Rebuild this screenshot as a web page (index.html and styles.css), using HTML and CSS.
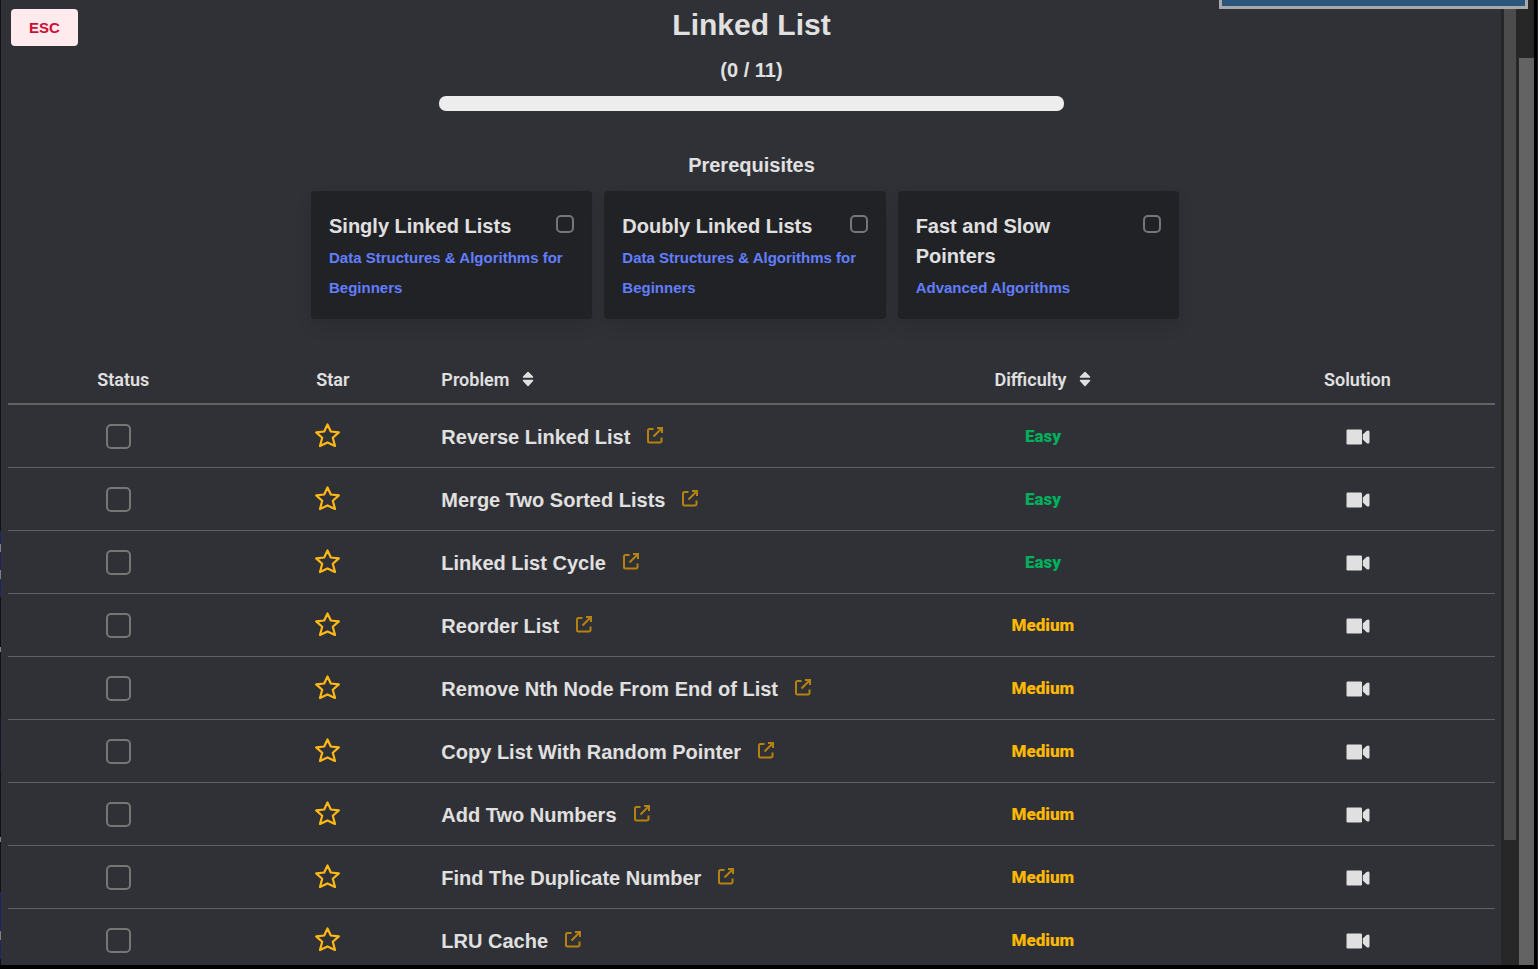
FILE: index.html
```html
<!DOCTYPE html>
<html lang="en">
<head>
<meta charset="utf-8">
<title>Linked List</title>
<link rel="stylesheet" href="styles.css">
</head>
<body>
<svg class="sprite" aria-hidden="true">
  <symbol id="star" viewBox="0 0 25 25"><path d="M12.500 1.500L15.800 8.500L23.800 9.400L17.800 14.800L20 23L12.500 19.400L5 23L7.200 14.800L1.200 9.400L9.200 8.500Z" fill="none" stroke="currentColor" stroke-width="2.200" stroke-linejoin="round"/></symbol>
  <symbol id="open" viewBox="0 0 18 18"><path d="M7.500 3H3.500A1.500 1.500 0 0 0 2 4.500V15A1.500 1.500 0 0 0 3.500 16.500H14A1.500 1.500 0 0 0 15.500 15V11.500M11 2H16V7M16 2L7.500 10.500" fill="none" stroke="currentColor" stroke-width="2"/></symbol>
  <symbol id="sort" viewBox="0 0 12 16"><path d="M6 1.500L10.500 6H1.500ZM6 14.500L1.500 9.500H10.500Z" stroke="currentColor" stroke-width="1.500" stroke-linejoin="round"/></symbol>
  <symbol id="video" viewBox="0 0 24 16"><rect x="0.500" y="0.500" width="15.500" height="15" rx="1.200"/><path d="M16.800 5.500L20.500 2Q23.500 0.500 23.500 3V13Q23.500 15.500 20.500 14L16.800 10.500Z"/></symbol>
</svg>
<div class="backdrop-edge"></div>
<main class="dialog">
  <button class="esc" type="button">ESC</button>
  <h1 class="title">Linked List</h1>
  <p class="count">(0 / 11)</p>
  <div class="progress" role="progressbar" aria-label="Problems solved" aria-valuenow="0" aria-valuemax="11"></div>
  <h2 class="subtitle">Prerequisites</h2>
  <section class="cards">
    <article class="card"><div class="card-head"><label for="p1">Singly Linked Lists</label><input class="check small" id="p1" type="checkbox"></div><a href="#">Data Structures &amp; Algorithms for Beginners</a></article>
    <article class="card"><div class="card-head"><label for="p2">Doubly Linked Lists</label><input class="check small" id="p2" type="checkbox"></div><a href="#">Data Structures &amp; Algorithms for Beginners</a></article>
    <article class="card"><div class="card-head"><label for="p3">Fast and Slow Pointers</label><input class="check small" id="p3" type="checkbox"></div><a href="#">Advanced Algorithms</a></article>
  </section>
  <table class="problems">
    <colgroup><col class="c-status"><col class="c-star"><col class="c-problem"><col class="c-difficulty"><col class="c-solution"></colgroup>
    <thead><tr><th>Status</th><th>Star</th><th class="left"><button class="sort" type="button">Problem <svg><use href="#sort"/></svg></button></th><th><button class="sort" type="button">Difficulty <svg><use href="#sort"/></svg></button></th><th>Solution</th></tr></thead>
    <tbody id="rows"></tbody>
  </table>
</main>
<div class="track inner"><div class="thumb"></div></div>
<div class="track outer"><div class="thumb"></div></div>
<div class="window-edge"></div>
<div class="toast"></div>
<script src="rows.js"></script>
</body>
</html>
```
FILE: styles.css
```css
* { box-sizing: border-box; }
body {
  margin: 0;
  height: 100vh;
  overflow: hidden;
  display: grid;
  grid-template-columns: 1px 1fr 18px 15px 3px 1px;
  grid-template-rows: minmax(0, 1fr) 3px 1px;
  background: #000;
  color: #e0e0e0;
  font: bold 20px/30px "Liberation Sans", Arial, sans-serif;
}
button { font: inherit; color: inherit; border: 0; background: none; padding: 0; cursor: pointer; }
a { color: inherit; text-decoration: none; }
svg { fill: currentColor; display: block; }
.sprite { position: absolute; width: 0; height: 0; }
.backdrop-edge {
  background: linear-gradient(#111 531px, #222468 531px 544px, #808080 544px 552px, #222468 552px 570px, #808080 570px 579px, #222468 579px 597px, #111 597px 647px, #808080 647px 652px, #111 652px 717px, #15152c 717px 772px, #111 772px 837px, #808080 837px 842px, #111 842px 892px, #222468 892px 931px, #808080 931px 940px, #222468 940px 959px, #111 959px);
}
.dialog {
  position: relative;
  overflow: hidden;
  padding: 2px 6px 0 7px;
  background: #303136;
  display: flex;
  flex-direction: column;
  align-items: center;
}
.dialog > * { flex-shrink: 0; }
.esc {
  position: absolute;
  left: 10px;
  top: 9px;
  padding: 4px 18px 3px;
  border-radius: 4px;
  background: #ffebee;
  color: #cc0f35;
  font-size: 15px;
}
.title { margin: 0; font-size: 30px; line-height: 45px; }
.count { margin: 8px 0 11px; }
.progress { width: 42%; height: 15px; border-radius: 7px; background: #ededed; }
.subtitle { margin: 39px 0 11px; font-size: 20px; }
.cards { width: 868px; max-width: 100%; margin-right: 13px; display: grid; grid-template-columns: repeat(3, 1fr); gap: 12px; }
.card { padding: 20px 18px 18px; border-radius: 4px; background: #212226; box-shadow: 0 8px 16px rgba(10, 10, 10, 0.1); }
.card-head { display: flex; justify-content: space-between; align-items: flex-start; gap: 24px; }
.card a { display: block; padding-top: 2px; margin-bottom: -2px; color: #627eff; font-size: 15px; }
.check { appearance: none; margin: 0 auto; width: 25px; height: 25px; border: 2px solid #767676; border-radius: 5px; display: block; }
.check.small { width: 18px; height: 18px; margin: 4px 0 0; flex: none; }
.problems { width: 100%; margin-top: 36px; table-layout: fixed; border-collapse: separate; border-spacing: 0; }
.c-status { width: 15.5%; }
.c-star { width: 12.7%; }
.c-problem { width: 29.5%; }
.c-difficulty { width: 23.8%; }
.c-solution { width: 18.5%; }
th { height: 50px; padding: 2px 0 0; border-bottom: 2px solid #636363; font: 600 18px/30px Roboto, sans-serif; }
td { height: 63px; padding: 0; border-bottom: 1px solid #5e5f62; text-align: center; }
th.left, td.left { text-align: left; padding-left: 14px; }
td.shift { padding-right: 10px; }
.sort { display: inline-flex; align-items: center; gap: 13px; }
.sort svg { width: 12px; height: 16px; margin-bottom: 2px; }
.name { display: flex; align-items: center; gap: 16px; padding-top: 2px; }
.name svg { width: 18px; height: 18px; margin-bottom: 4px; }
.name .open { color: #b5820f; }
.star { color: #ffb814; display: block; margin: 0 auto; padding-bottom: 2px; }
.star svg { width: 25px; height: 25px; }
.video { display: block; margin: 0 auto; padding: 2px 0 0 2px; }
.video svg { width: 24px; height: 16px; }
.level { display: block; padding-bottom: 1px; font: 900 17px/30px Roboto, sans-serif; }
.easy { color: #00af5b; }
.medium { color: #ffb800; }
.track { background: #272727; }
.inner { padding: 0 3px; }
.inner .thumb { height: 87%; background: #4c4c4c; }
.outer { padding-top: 58px; }
.outer .thumb { height: 100%; background: #636363; }
.window-edge { grid-column: 6; grid-row: 1 / 4; background: #201f22; }
.toast { position: absolute; top: 0; right: 10px; width: 309px; height: 9px; border: 3px solid #a9a9a9; border-top: 0; background: #29567a; }
```
FILE: rows.js
```js
const problems = [
  ["Reverse Linked List", "Easy"],
  ["Merge Two Sorted Lists", "Easy"],
  ["Linked List Cycle", "Easy"],
  ["Reorder List", "Medium"],
  ["Remove Nth Node From End of List", "Medium"],
  ["Copy List With Random Pointer", "Medium"],
  ["Add Two Numbers", "Medium"],
  ["Find The Duplicate Number", "Medium"],
  ["LRU Cache", "Medium"]
];
document.getElementById("rows").innerHTML = problems.map(([name, level]) => `
  <tr>
    <td class="shift"><input class="check" type="checkbox" aria-label="${name} done"></td>
    <td class="shift"><button class="star" type="button" aria-label="Star ${name}"><svg><use href="#star"/></svg></button></td>
    <td class="left"><div class="name"><a href="#">${name}</a><a class="open" href="#" aria-label="Open ${name}"><svg><use href="#open"/></svg></a></div></td>
    <td><span class="level ${level.toLowerCase()}">${level}</span></td>
    <td><button class="video" type="button" aria-label="${name} video"><svg><use href="#video"/></svg></button></td>
  </tr>`).join("");
```
